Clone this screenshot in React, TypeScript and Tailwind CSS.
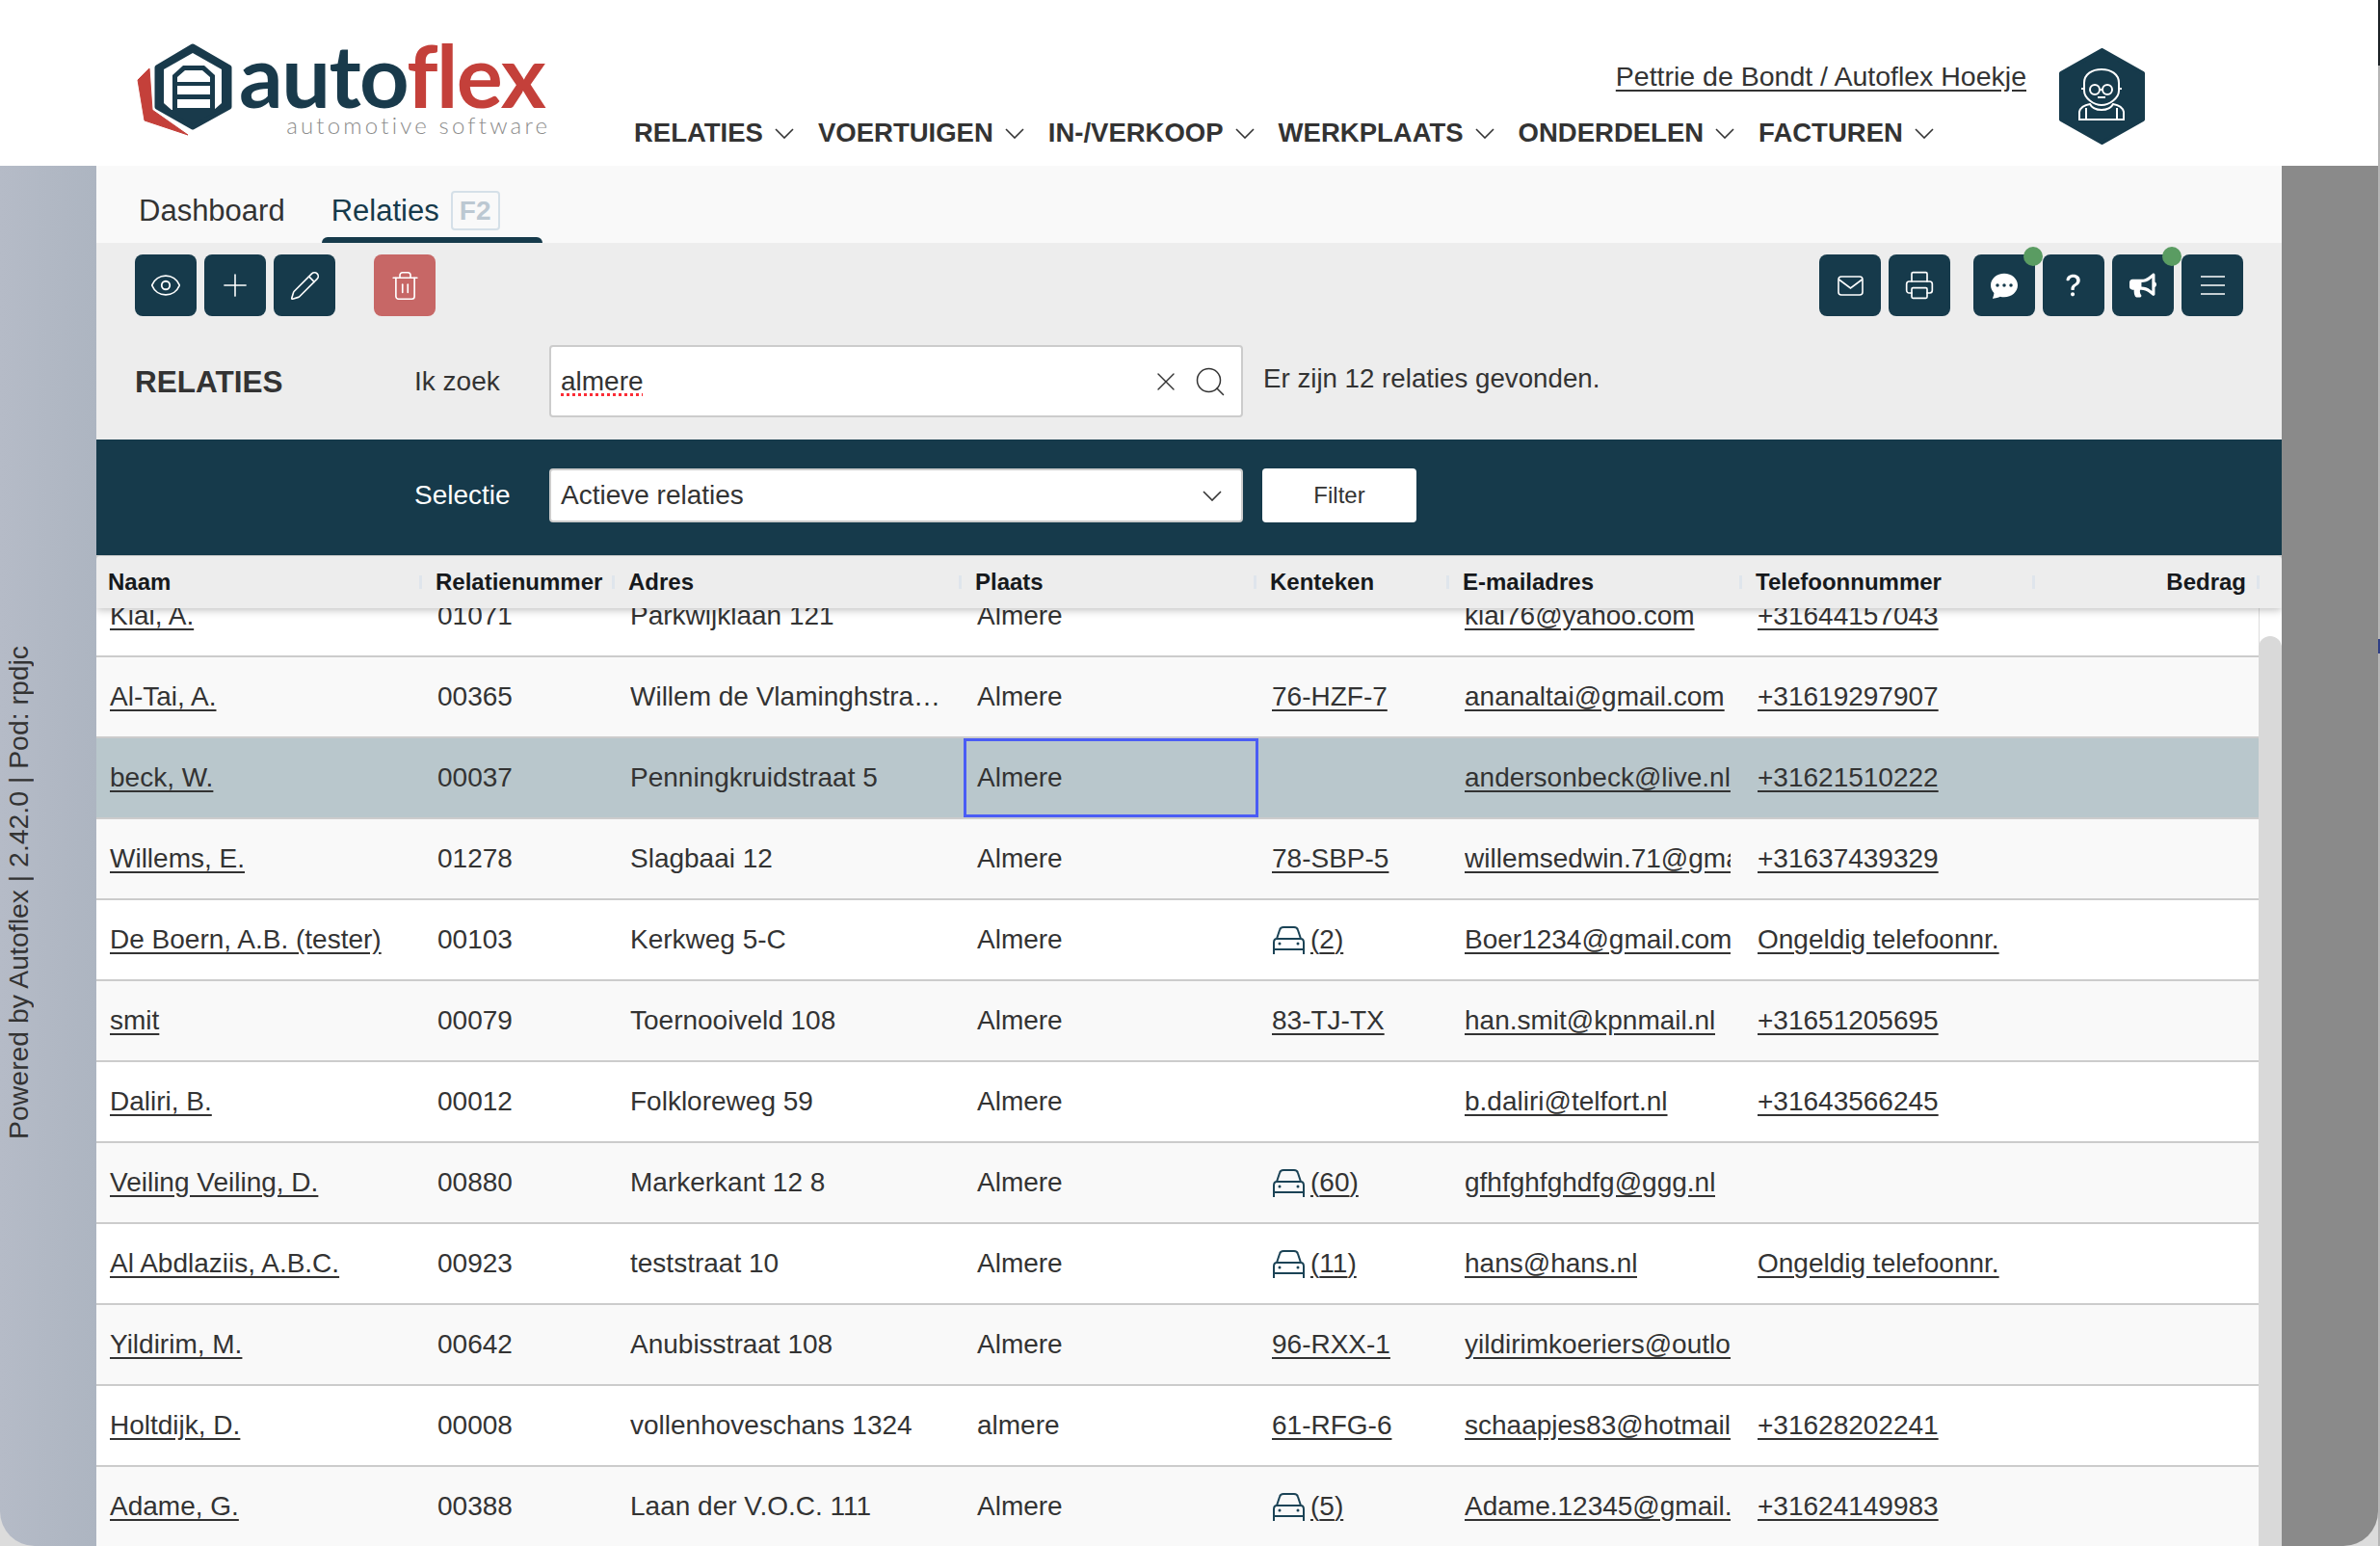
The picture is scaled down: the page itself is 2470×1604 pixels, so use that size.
import React from "react";
import { Eye, Pencil, Plus, Printer, Search, Trash2, X } from "lucide-react";
import { BsChatDotsFill, BsQuestionLg } from "react-icons/bs";
import { FaBullhorn } from "react-icons/fa";

const navItems = ["RELATIES", "VOERTUIGEN", "IN-/VERKOOP", "WERKPLAATS", "ONDERDELEN", "FACTUREN"];

const columns = ["Naam", "Relatienummer", "Adres", "Plaats", "Kenteken", "E-mailadres", "Telefoonnummer"];

type Row = {
  name: string;
  nr: string;
  address: string;
  city: string;
  plate?: string;
  cars?: number;
  email: string;
  phone?: string;
};

const rows: Row[] = [
  { name: "Kiai, A.", nr: "01071", address: "Parkwijklaan 121", city: "Almere", email: "kiai76@yahoo.com", phone: "+31644157043" },
  { name: "Al-Tai, A.", nr: "00365", address: "Willem de Vlaminghstraat 12", city: "Almere", plate: "76-HZF-7", email: "ananaltai@gmail.com", phone: "+31619297907" },
  { name: "beck, W.", nr: "00037", address: "Penningkruidstraat 5", city: "Almere", email: "andersonbeck@live.nl", phone: "+31621510222" },
  { name: "Willems, E.", nr: "01278", address: "Slagbaai 12", city: "Almere", plate: "78-SBP-5", email: "willemsedwin.71@gmail.com", phone: "+31637439329" },
  { name: "De Boern, A.B. (tester)", nr: "00103", address: "Kerkweg 5-C", city: "Almere", cars: 2, email: "Boer1234@gmail.com", phone: "Ongeldig telefoonnr." },
  { name: "smit", nr: "00079", address: "Toernooiveld 108", city: "Almere", plate: "83-TJ-TX", email: "han.smit@kpnmail.nl", phone: "+31651205695" },
  { name: "Daliri, B.", nr: "00012", address: "Folkloreweg 59", city: "Almere", email: "b.daliri@telfort.nl", phone: "+31643566245" },
  { name: "Veiling Veiling, D.", nr: "00880", address: "Markerkant 12 8", city: "Almere", cars: 60, email: "gfhfghfghdfg@ggg.nl" },
  { name: "Al Abdlaziis, A.B.C.", nr: "00923", address: "teststraat 10", city: "Almere", cars: 11, email: "hans@hans.nl", phone: "Ongeldig telefoonnr." },
  { name: "Yildirim, M.", nr: "00642", address: "Anubisstraat 108", city: "Almere", plate: "96-RXX-1", email: "yildirimkoeriers@outlook.com" },
  { name: "Holtdijk, D.", nr: "00008", address: "vollenhoveschans 1324", city: "almere", plate: "61-RFG-6", email: "schaapjes83@hotmail.com", phone: "+31628202241" },
  { name: "Adame, G.", nr: "00388", address: "Laan der V.O.C. 111", city: "Almere", cars: 5, email: "Adame.12345@gmail.com", phone: "+31624149983" },
];

function Chevron() {
  return (
    <svg viewBox="0 0 20 11" className="h-[11px] w-[20px]" fill="none" aria-hidden="true">
      <path d="M1 1l9 9 9-9" stroke="currentColor" strokeWidth="1.6" />
    </svg>
  );
}

function LogoMark() {
  return (
    <svg viewBox="0 0 105 96" className="h-[96px] w-[105px] shrink-0" aria-hidden="true">
      <path d="M15 26 3 38l7 42 45 15-37-26Z" fill="#c4403a" stroke="#c4403a" strokeWidth="1" strokeLinejoin="round" />
      <path d="M60 3 98 25v41L60 87 23 66V25Z" fill="#193a4b" stroke="#193a4b" strokeWidth="5" strokeLinejoin="round" />
      <path d="M60 10 90 27v35l-8 7H38l-8-7V27Z" fill="#fff" />
      <path d="M39 69V33l11-10h22l11 10v36Z" fill="#193a4b" />
      <path d="M44 40v-5l8-7h18l8 7v5ZM44 44h34v9H44ZM44 58h34v9H44Z" fill="#fff" />
    </svg>
  );
}

function Avatar() {
  return (
    <svg viewBox="0 0 89 100" className="h-[100px] w-[89px] shrink-0" aria-hidden="true">
      <path d="M44.5 2 87 26v48L44.5 98 2 74V26Z" fill="#163a4b" stroke="#163a4b" strokeWidth="4" strokeLinejoin="round" />
      <g fill="none" stroke="#fff" strokeWidth="2">
        <path d="M26 36c0-9 8-14 18-14s18 5 18 14v8c0 8-10 15-18 15s-18-7-18-15Z" />
        <circle cx="37" cy="43" r="5" />
        <circle cx="50" cy="43" r="5" />
        <path d="M42 43h3M40 51h8M23 42h3M62 42h3" />
        <path d="M32 58c-6 1-10 4-11 8v8h46v-8c-1-4-5-7-11-8-2 4-7 6-12 6s-10-2-12-6ZM28 62v12M60 62v12" />
      </g>
    </svg>
  );
}

function CarIcon() {
  return (
    <svg viewBox="0 0 35 29" className="h-[29px] w-[35px] shrink-0" fill="none" aria-hidden="true">
      <path
        d="M5 13 8 4c.5-2 2-3 4-3h11c2 0 3.500 1 4 3l3 9M2 29V17c0-2 1-4 3-4h25c2 0 3 2 3 4v12M2 24h31"
        stroke="#1b4356"
        strokeWidth="2"
      />
      <circle cx="8" cy="18" r="1.500" fill="#1b4356" />
      <circle cx="27" cy="18" r="1.500" fill="#1b4356" />
    </svg>
  );
}

function ToolButton({ children, dot, danger }: { children: React.ReactNode; dot?: boolean; danger?: boolean }) {
  return (
    <button
      type="button"
      className={
        danger
          ? "relative flex h-16 w-16 items-center justify-center rounded-lg bg-[#c76766] text-white"
          : "relative flex h-16 w-16 items-center justify-center rounded-lg bg-[#163a4b] text-white"
      }
    >
      {children}
      {dot && <span className="absolute -right-[8px] -top-[8px] h-5 w-5 rounded-full bg-[#5a9c62]" />}
    </button>
  );
}

function Cell({ children, selected }: { children: React.ReactNode; selected?: boolean }) {
  return (
    <div
      className={
        selected
          ? "flex min-w-0 items-center overflow-hidden whitespace-nowrap border-[3px] border-[#4a5cf5] px-[11px]"
          : "flex min-w-0 items-center overflow-hidden whitespace-nowrap px-[14px]"
      }
    >
      {children}
    </div>
  );
}

export default function App() {
  return (
    <div className="flex h-[1604px] w-[2470px] overflow-hidden bg-[#dcdcdc] font-['Liberation_Sans',Arial,sans-serif] text-[#333]">
      <div className="flex w-[2468px] flex-col">
        <header className="flex h-[172px] shrink-0 bg-white pl-[140px]">
          <div className="flex w-[518px] shrink-0 items-start pt-[45px]">
            <LogoMark />
            <div className="flex flex-col items-end pl-[3px]">
              <div className="-mt-[12px] h-[84px] font-['Lato',sans-serif] text-[90px] font-bold leading-[88px] tracking-[-1.5px] text-[#193a4b]">
                auto<span className="text-[#c4403a]">flex</span>
              </div>
              <div className="-mr-[6px] -mt-px font-['Lato',sans-serif] text-[24px] font-light leading-[28px] tracking-[3.2px] text-[#8c8c8c]">
                automotive software
              </div>
            </div>
          </div>
          <div className="flex w-[1445px] flex-col">
            <div className="mt-[61px] text-right text-[28.500px] leading-[36px] underline underline-offset-4">
              Pettrie de Bondt / Autoflex Hoekje
            </div>
            <nav className="mt-[23px] flex items-center gap-[25px] text-[27.500px] font-bold leading-[36px]">
              {navItems.map((item) => (
                <div key={item} className="flex items-center gap-[12px]">
                  {item}
                  <Chevron />
                </div>
              ))}
            </nav>
          </div>
          <div className="ml-[34px] pt-[50px]">
            <Avatar />
          </div>
        </header>

        <div className="flex min-h-0 flex-1">
          <aside className="flex w-[100px] shrink-0 flex-col rounded-bl-[36px] bg-gradient-to-r from-[#b5bbc7] to-[#adb5c1] pb-[422px]">
            <div className="mt-auto flex w-[38px] justify-center">
              <span className="rotate-180 whitespace-nowrap text-[28.400px] leading-[30px] [writing-mode:vertical-rl]">
                Powered by Autoflex | 2.42.0 | Pod: rpdjc
              </span>
            </div>
          </aside>

          <main className="flex w-[2268px] shrink-0 flex-col">
            <div className="flex h-[80px] shrink-0 bg-[#f9f9f9] text-[31px]">
              <div className="ml-[44px] pt-[29px] leading-[36px]">Dashboard</div>
              <div className="ml-[38px] flex h-[80px] w-[229px] flex-col text-[#163a4b]">
                <div className="flex pl-[10px]">
                  <span className="pt-[29px] leading-[36px]">Relaties</span>
                  <span className="ml-[12px] mt-[26px] flex h-[41px] w-[51px] items-center justify-center rounded border-2 border-[#d5e0e8] text-[28px] font-bold text-[#bcc8d2]">
                    F2
                  </span>
                </div>
                <div className="mt-auto h-[6px] rounded-t-md bg-[#163a4b]" />
              </div>
            </div>

            <div className="shrink-0 bg-[#ededed]">
              <div className="flex px-[40px] pt-[12px]">
                <div className="flex gap-2">
                  <ToolButton><Eye size={34} strokeWidth={1.25} /></ToolButton>
                  <ToolButton><Plus size={38} strokeWidth={1} /></ToolButton>
                  <ToolButton><Pencil size={33} strokeWidth={1.2} /></ToolButton>
                </div>
                <div className="ml-[40px]">
                  <ToolButton danger><Trash2 size={33} strokeWidth={1.2} /></ToolButton>
                </div>
                <div className="ml-auto flex gap-2">
                  <ToolButton>
                    <svg viewBox="0 0 27 21" className="h-[21px] w-[27px]" fill="none" aria-hidden="true">
                      <rect x="1" y="1" width="25" height="19" rx="3" stroke="currentColor" strokeWidth="1.600" />
                      <path d="M1.500 4 13.500 13 25.500 4" stroke="currentColor" strokeWidth="1.600" />
                    </svg>
                  </ToolButton>
                  <ToolButton><Printer size={32} strokeWidth={1.25} /></ToolButton>
                </div>
                <div className="ml-6 flex gap-2">
                  <ToolButton dot><BsChatDotsFill size={28} /></ToolButton>
                  <ToolButton><BsQuestionLg size={30} /></ToolButton>
                  <ToolButton dot><FaBullhorn size={28} /></ToolButton>
                  <ToolButton>
                    <svg viewBox="0 0 25 20" className="h-[20px] w-[25px]" fill="none" aria-hidden="true">
                      <path d="M0 1h25M0 10h25M0 19h25" stroke="currentColor" strokeWidth="1.500" />
                    </svg>
                  </ToolButton>
                </div>
              </div>
              <div className="flex h-[128px] items-center pl-[40px] pt-[7px]">
                <h1 className="w-[290px] text-[31.500px] font-bold leading-[36px]">RELATIES</h1>
                <div className="w-[140px] text-[28px]">Ik zoek</div>
                <div className="flex h-[75px] w-[720px] items-center rounded border-2 border-[#ccc] bg-white pl-[10px] pr-[14px] text-[28px]">
                  <span className="underline decoration-red-500 decoration-dotted underline-offset-4">almere</span>
                  <X size={32} strokeWidth={1} className="ml-auto" />
                  <Search size={36} strokeWidth={1} className="ml-[12px]" />
                </div>
                <div className="ml-[21px] -translate-y-[3px] text-[27.700px]">Er zijn 12 relaties gevonden.</div>
              </div>
            </div>

            <div className="flex h-[120px] shrink-0 items-center bg-[#163a4b] pb-[4px] pl-[330px]">
              <div className="w-[140px] text-[28px] text-white">Selectie</div>
              <div className="flex h-[56px] w-[720px] items-center rounded border-2 border-[#ccc] bg-white pl-[10px] pr-[20px] text-[28px]">
                Actieve relaties
                <span className="ml-auto"><Chevron /></span>
              </div>
              <button type="button" className="ml-[20px] h-[56px] w-[160px] rounded bg-white text-[24px]">
                Filter
              </button>
            </div>

            <div className="flex min-h-0 flex-1 flex-col overflow-hidden pt-px">
              <div className="relative z-10 grid h-[54px] shrink-0 grid-cols-[340px_200px_360px_306px_200px_304px_304px_254px] rounded-t bg-[#ededed] text-[24px] font-bold text-[#16191c] shadow-[0_2px_8px_rgba(0,0,0,0.25)]">
                {columns.map((label) => (
                  <div key={label} className="flex items-center justify-between pl-[12px] pr-[2px]">
                    <span className="whitespace-nowrap">{label}</span>
                    <span className="h-[14px] w-[3px] bg-[#dfe5ec]" />
                  </div>
                ))}
                <div className="flex items-center justify-end gap-[11px] pr-[23px]">
                  <span>Bedrag</span>
                  <span className="h-[14px] w-[3px] bg-[#dfe5ec]" />
                </div>
              </div>

              <div className="flex min-h-0 flex-1">
                <div className="w-[2244px] shrink-0">
                  <div className="-mt-[33px]">
                    {rows.map((r, i) => {
                      const selected = i === 2;
                      return (
                        <div
                          key={r.nr}
                          className={
                            selected
                              ? "grid h-[84px] grid-cols-[340px_200px_360px_306px_200px_304px_304px_230px] border-b-2 border-[#ccc] bg-[#b9c7cc] text-[28px]"
                              : i % 2 === 0
                                ? "grid h-[84px] grid-cols-[340px_200px_360px_306px_200px_304px_304px_230px] border-b-2 border-[#ccc] bg-white text-[28px]"
                                : "grid h-[84px] grid-cols-[340px_200px_360px_306px_200px_304px_304px_230px] border-b-2 border-[#ccc] bg-[#f9f9f9] text-[28px]"
                          }
                        >
                          <Cell><span className="underline underline-offset-4">{r.name}</span></Cell>
                          <Cell>{r.nr}</Cell>
                          <Cell><span className="truncate">{r.address}</span></Cell>
                          <Cell selected={selected}>{r.city}</Cell>
                          <Cell>
                            {r.plate && <span className="underline underline-offset-4">{r.plate}</span>}
                            {r.cars !== undefined && (
                              <span className="flex items-center gap-[5px]">
                                <CarIcon />
                                <span className="underline underline-offset-4">({r.cars})</span>
                              </span>
                            )}
                          </Cell>
                          <Cell><span className="block overflow-hidden underline underline-offset-4">{r.email}</span></Cell>
                          <Cell>
                            {r.phone && <span className="underline underline-offset-4">{r.phone}</span>}
                          </Cell>
                          <Cell>{""}</Cell>
                        </div>
                      );
                    })}
                  </div>
                </div>
                <div className="flex w-[24px] shrink-0 flex-col border-l border-[#ddd] bg-white pt-[29px]">
                  <div className="-ml-px flex-1 rounded-t-full bg-[#d9d9d9]" />
                </div>
              </div>
            </div>
          </main>

          <div className="w-[100px] shrink-0 rounded-br-[36px] bg-[#8a8a8a]" />
        </div>
      </div>

      <div className="flex w-[2px] shrink-0 flex-col bg-[#b5b5b5]">
        <div className="h-[68px] bg-[#1c2226]" />
        <div className="mt-[595px] h-[15px] bg-[#2f3f86]" />
      </div>
    </div>
  );
}
